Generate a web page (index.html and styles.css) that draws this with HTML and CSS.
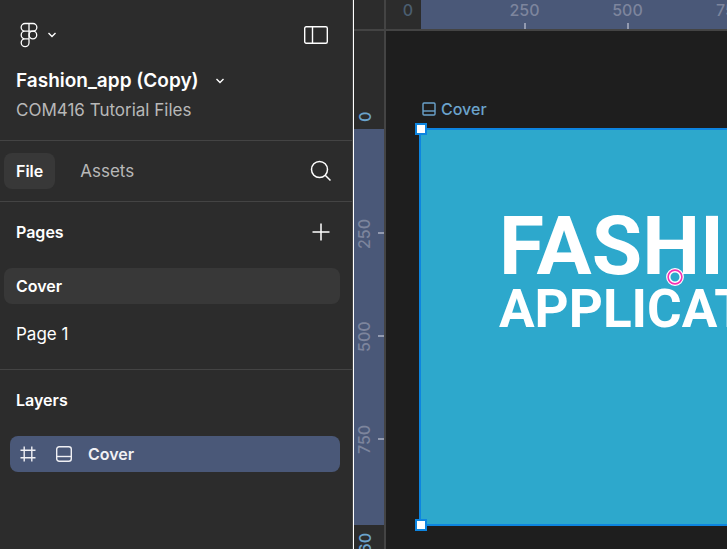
FILE: index.html
```html
<!DOCTYPE html>
<html lang="en">
<head>
<meta charset="utf-8">
<title>Fashion_app (Copy)</title>
<link rel="stylesheet" href="styles.css">
</head>
<body>
<div class="app">
  <aside class="sidebar">
    <header class="file-header">
      <div class="toolbar">
        <button class="icon-button menu" aria-label="Main menu">
          <svg width="18" height="26" viewBox="0 0 18 26" fill="none" stroke="currentColor" stroke-width="1.3"><path d="M9 1.5H5a3.8 3.8 0 0 0 0 7.7h4zM9 1.5h4a3.8 3.8 0 0 1 0 7.7H9zM9 9.200H5a3.800 3.800 0 0 0 0 7.600h4zM5 16.800a3.900 3.900 0 1 0 4 3.900v-3.900z"/><circle cx="12.900" cy="13" r="3.800"/></svg>
          <svg width="10" height="6" viewBox="0 0 10 6" fill="none" stroke="currentColor" stroke-width="1.4"><path d="M1.500 1L5 4.500 8.500 1"/></svg>
        </button>
        <button class="icon-button" aria-label="Toggle panels">
          <svg width="24" height="18" viewBox="0 0 24 18" fill="none" stroke="currentColor" stroke-width="1.400"><rect x=".7" y=".7" width="22.600" height="16.600" rx="1.500"/><path d="M8.500 1v16"/></svg>
        </button>
      </div>
      <button class="file-name">
        <span>Fashion_app (Copy)</span>
        <svg width="10" height="6" viewBox="0 0 10 6" fill="none" stroke="currentColor" stroke-width="1.400"><path d="M1.500 1L5 4.500 8.500 1"/></svg>
      </button>
      <a class="project" href="#">COM416 Tutorial Files</a>
    </header>

    <nav class="tabs" aria-label="Panels">
      <button class="tab active">File</button>
      <button class="tab">Assets</button>
      <button class="icon-button search" aria-label="Search">
        <svg width="22" height="22" viewBox="0 0 22 22" fill="none" stroke="currentColor" stroke-width="1.500"><circle cx="9.500" cy="9.500" r="8"/><path d="M15.200 15.200l5.300 5.300"/></svg>
      </button>
    </nav>

    <section class="pages">
      <div class="section-head">
        <h2>Pages</h2>
        <button class="icon-button" aria-label="Add page">
          <svg width="18" height="18" viewBox="0 0 18 18" fill="none" stroke="currentColor" stroke-width="1.500"><path d="M9 .5v17M.5 9h17"/></svg>
        </button>
      </div>
      <button class="page active">Cover</button>
      <button class="page">Page 1</button>
    </section>

    <section class="layers">
      <div class="section-head"><h2>Layers</h2></div>
      <button class="layer">
        <svg width="16" height="16" viewBox="0 0 16 16" fill="none" stroke="currentColor" stroke-width="1.400"><path d="M4.200 .5v15M11.800 .5v15M.5 4.200h15M.5 11.800h15"/></svg>
        <svg width="16" height="16" viewBox="0 0 16 16" fill="none" stroke="currentColor" stroke-width="1.400"><rect x=".7" y=".7" width="14.600" height="14.600" rx="2.500"/><path d="M1 10.500h14"/></svg>
        <span>Cover</span>
      </button>
    </section>
  </aside>

  <main class="editor">
    <div class="corner"></div>
    <div class="ruler ruler-x">
      <span class="origin">0</span>
      <div class="band"><span class="mark">250</span><span class="mark">500</span><span class="mark">750</span></div>
    </div>
    <div class="ruler ruler-y">
      <span class="origin">0</span>
      <div class="band"><span class="mark">250</span><span class="mark">500</span><span class="mark">750</span></div>
      <span class="extent">960</span>
    </div>
    <div class="canvas">
      <div class="frame-label">
        <svg width="14" height="14" viewBox="0 0 14 14" fill="none" stroke="currentColor" stroke-width="1.400"><rect x="1" y="1" width="12" height="12" rx="1"/><path d="M1 9h12"/></svg>
        <span>Cover</span>
      </div>
      <div class="frame">
        <div class="headline">FASHION</div>
        <div class="subhead">APPLICATION</div>
        <i class="handle top-left"></i>
        <i class="handle bottom-left"></i>
        <svg class="target" width="18" height="18" viewBox="0 0 18 18" fill="none"><circle cx="9" cy="9" r="6.700" stroke="#fff" stroke-width="4.400"/><circle cx="9" cy="9" r="6.900" stroke="#f531b3" stroke-width="1.600"/></svg>
      </div>
    </div>
  </main>
</div>
</body>
</html>
```
FILE: styles.css
```css
* { box-sizing: border-box; }

body {
  margin: 0;
  background: #1e1e1e;
  color: #fff;
  font: 17px/24px Inter, sans-serif;
}

button {
  padding: 0;
  border: 0;
  background: none;
  color: inherit;
  font: inherit;
  text-align: left;
}

svg { display: block; flex: none; }

h2 { margin: 0; font-size: 16px; font-weight: 600; }

.app {
  display: grid;
  grid-template-columns: 354px minmax(0, 1fr);
  height: 100vh;
  overflow: hidden;
}

/* Left panel */
.sidebar {
  background: #2c2c2c;
  border-right: 1px solid #fff;
  box-shadow: inset -1px 0 #444;
}

.file-header {
  padding: 20px 25px 18px 16px;
  border-bottom: 1px solid #444;
}

.toolbar, .section-head {
  display: flex;
  align-items: center;
  justify-content: space-between;
}

.toolbar { height: 30px; margin-bottom: 17px; }

.menu { display: flex; align-items: center; gap: 9px; padding-left: 4px; }

.file-name {
  display: flex;
  align-items: center;
  gap: 16px;
  height: 28px;
  font-size: 19px;
  font-weight: 600;
}

.project {
  display: block;
  padding-top: 3px;
  color: #b8b8b8;
  text-decoration: none;
}

.tabs {
  display: flex;
  align-items: center;
  gap: 13px;
  height: 61px;
  padding: 0 21px 0 4px;
  border-bottom: 1px solid #444;
}

.tab {
  height: 36px;
  padding: 0 12px;
  border-radius: 8px;
  color: #b8b8b8;
}

.tab.active { background: #383838; color: #fff; font-size: 16px; font-weight: 600; }

.search { margin-left: auto; }

.pages {
  padding: 0 13px 17px 4px;
  border-bottom: 1px solid #444;
}

.section-head { height: 60px; padding: 0 10px 0 12px; }

.page {
  display: block;
  width: 100%;
  height: 36px;
  margin-bottom: 12px;
  padding: 0 12px;
  border-radius: 8px;
}

.pages .section-head { margin-bottom: 6px; }
.page:last-child { margin-bottom: 0; }
.page.active { background: #383838; font-size: 16px; font-weight: 600; }

.layers { padding: 0 13px 0 4px; }

.layer {
  display: flex;
  align-items: center;
  gap: 20px;
  width: calc(100% - 6px);
  height: 36px;
  margin: 6px 0 0 6px;
  padding: 0 10px;
  border-radius: 8px;
  background: #4a5878;
  color: #f0f0f4;
  font-size: 16px;
  font-weight: 600;
}

.layer span { margin-left: -4px; }

/* Rulers */
.editor {
  display: grid;
  grid-template-columns: 32px minmax(0, 1fr);
  grid-template-rows: 31px minmax(0, 1fr);
  overflow: hidden;
}

.corner, .ruler { background: #2c2c2c; color: #7d859d; overflow: hidden; }
.corner, .ruler-x { border-bottom: 2px solid #444; }
.corner, .ruler-y { border-right: 2px solid #444; }

.ruler, .ruler .band, .mark { display: flex; }
.ruler { font-size: 16px; font-weight: 500; line-height: 20px; }
.ruler .band { flex: none; background: #4a5878; }
.mark { flex: 0 0 103px; align-items: center; justify-content: space-between; }
.mark::after { content: ""; background: #929ab0; }

.ruler-x .origin { flex: none; width: 35px; padding-right: 8px; text-align: right; color: #4b5e70; }
.ruler-x .band { width: 791px; padding-left: 52px; }
.ruler-x .mark { flex-direction: column; }
.ruler-x .mark::after { width: 2px; height: 6px; }

.ruler-y { flex-direction: column; }
.ruler-y .origin, .ruler-y .extent, .ruler-y .mark {
  writing-mode: vertical-rl;
  transform: rotate(180deg);
}
.ruler-y .origin { flex: none; height: 98px; padding-top: 7px; color: #6ba3cc; }
.ruler-y .band { flex-direction: column; height: 396px; padding-top: 53px; }
.ruler-y .mark { flex-direction: column; }
.ruler-y .mark::after { width: 6px; height: 2px; }
.ruler-y .extent { flex: none; margin-top: 8px; color: #6ba3cc; }
.ruler-y .origin, .ruler-y .extent { align-self: flex-start; margin-left: 1px; }

/* Canvas */
.canvas { padding: 66px 0 0 33px; overflow: hidden; }

.frame-label {
  display: flex;
  align-items: center;
  gap: 5px;
  height: 24px;
  margin-bottom: 7px;
  padding-left: 3px;
  color: #6ba3cc;
  font-size: 16px;
  font-weight: 500;
}

.frame {
  position: relative;
  width: 795px;
  height: 398px;
  padding: 78px 0 0 78px;
  border: 2px solid #0d85e0;
  background: #2da8cc;
  font-family: Roboto, sans-serif;
  font-weight: 700;
}

.headline { font-size: 82px; line-height: 76px; }
.subhead { font-size: 53px; line-height: 50px; }

.handle {
  position: absolute;
  left: -6px;
  width: 12px;
  height: 12px;
  border: 2px solid #0d85e0;
  background: #fff;
}

.top-left { top: -7px; }
.bottom-left { bottom: -7px; }
.target { position: absolute; left: 245px; top: 138px; }
```
